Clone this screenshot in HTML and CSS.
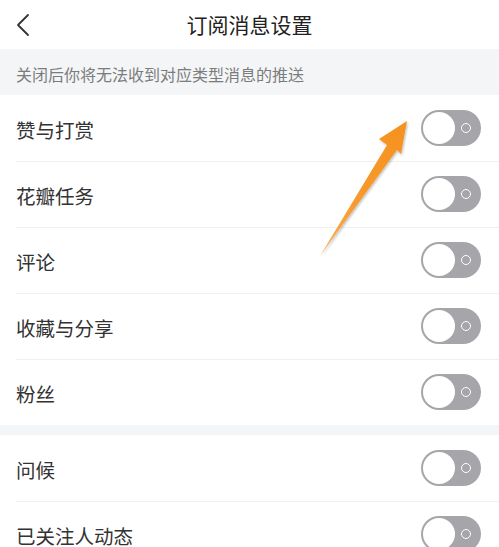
FILE: index.html
```html
<!DOCTYPE html>
<html lang="zh-CN">
<head>
<meta charset="utf-8">
<title>订阅消息设置</title>
<link rel="stylesheet" href="styles.css">
</head>
<body>
<div class="page">
  <header class="nav">
    <svg class="back" width="14" height="24" viewBox="0 0 14 24"><path d="M12 2 L2 12 L12 22" fill="none" stroke="#333" stroke-width="1.8" stroke-linecap="round" stroke-linejoin="round"/></svg>
    <h1 class="title">订阅消息设置</h1>
  </header>
  <div class="hint">关闭后你将无法收到对应类型消息的推送</div>
  <ul class="group">
    <li class="row"><span class="label">赞与打赏</span><span class="switch"><span class="knob"></span><span class="ring"></span></span></li>
    <li class="row"><span class="label">花瓣任务</span><span class="switch"><span class="knob"></span><span class="ring"></span></span></li>
    <li class="row"><span class="label">评论</span><span class="switch"><span class="knob"></span><span class="ring"></span></span></li>
    <li class="row"><span class="label">收藏与分享</span><span class="switch"><span class="knob"></span><span class="ring"></span></span></li>
    <li class="row"><span class="label">粉丝</span><span class="switch"><span class="knob"></span><span class="ring"></span></span></li>
  </ul>
  <div class="gap"></div>
  <ul class="group">
    <li class="row"><span class="label">问候</span><span class="switch"><span class="knob"></span><span class="ring"></span></span></li>
    <li class="row"><span class="label">已关注人动态</span><span class="switch"><span class="knob"></span><span class="ring"></span></span></li>
  </ul>
  <svg class="arrow" width="499" height="547" viewBox="0 0 499 547">
    <defs>
      <linearGradient id="ag" x1="320" y1="256" x2="407" y2="121" gradientUnits="userSpaceOnUse">
        <stop offset="0" stop-color="#f9b25a"/>
        <stop offset="0.4" stop-color="#f69a2e"/>
        <stop offset="1" stop-color="#f5921f"/>
      </linearGradient>
      <filter id="sh" x="-20%" y="-20%" width="140%" height="140%">
        <feDropShadow dx="1" dy="1.5" stdDeviation="1.2" flood-color="#000" flood-opacity="0.25"/>
      </filter>
    </defs>
    <path d="M320 256 L387 145 L379 139 L407 121 L401 154 L397 150 Z" fill="url(#ag)" filter="url(#sh)"/>
  </svg>
</div>
</body>
</html>
```
FILE: styles.css
```css
* { box-sizing: border-box; }
html, body { margin: 0; padding: 0; background: #fff; }
body {
  font-family: "Noto Sans CJK SC", "Noto Sans", sans-serif;
  color: #333;
}
.page {
  position: relative;
  width: 499px;
  height: 547px;
  overflow: hidden;
}
.nav {
  height: 49px;
  display: flex;
  align-items: center;
  justify-content: center;
  position: relative;
}
.back {
  position: absolute;
  left: 16px;
  top: 13px;
}
.title {
  margin: 0;
  font-size: 21px;
  font-weight: 400;
  color: #222;
  line-height: 1;
}
.hint {
  height: 46px;
  background: #f4f5f7;
  color: #7c7c7c;
  font-size: 16px;
  padding: 4px 16px 0;
  display: flex;
  align-items: center;
}
.group {
  list-style: none;
  margin: 0;
  padding: 0;
}
.row {
  height: 66px;
  display: flex;
  align-items: center;
  justify-content: space-between;
  padding: 0 18px 0 16px;
  position: relative;
}
.row + .row::before {
  content: "";
  position: absolute;
  left: 16px;
  right: 0;
  top: 0;
  height: 1px;
  background: #f0f0f0;
}
.label {
  font-size: 19.5px;
  color: #333;
  padding-top: 2px;
}
.switch {
  width: 60px;
  height: 36px;
  border-radius: 18px;
  background: #a5a5aa;
  position: relative;
  flex: none;
}
.knob {
  position: absolute;
  left: 2px;
  top: 2px;
  width: 32px;
  height: 32px;
  border-radius: 50%;
  background: #fff;
}
.ring {
  position: absolute;
  left: 40px;
  top: 13px;
  width: 10px;
  height: 10px;
  border-radius: 50%;
  border: 1.5px solid #fff;
}
.gap {
  height: 10px;
  background: #f4f5f7;
}
.arrow {
  position: absolute;
  left: 0;
  top: 0;
  pointer-events: none;
}
```
